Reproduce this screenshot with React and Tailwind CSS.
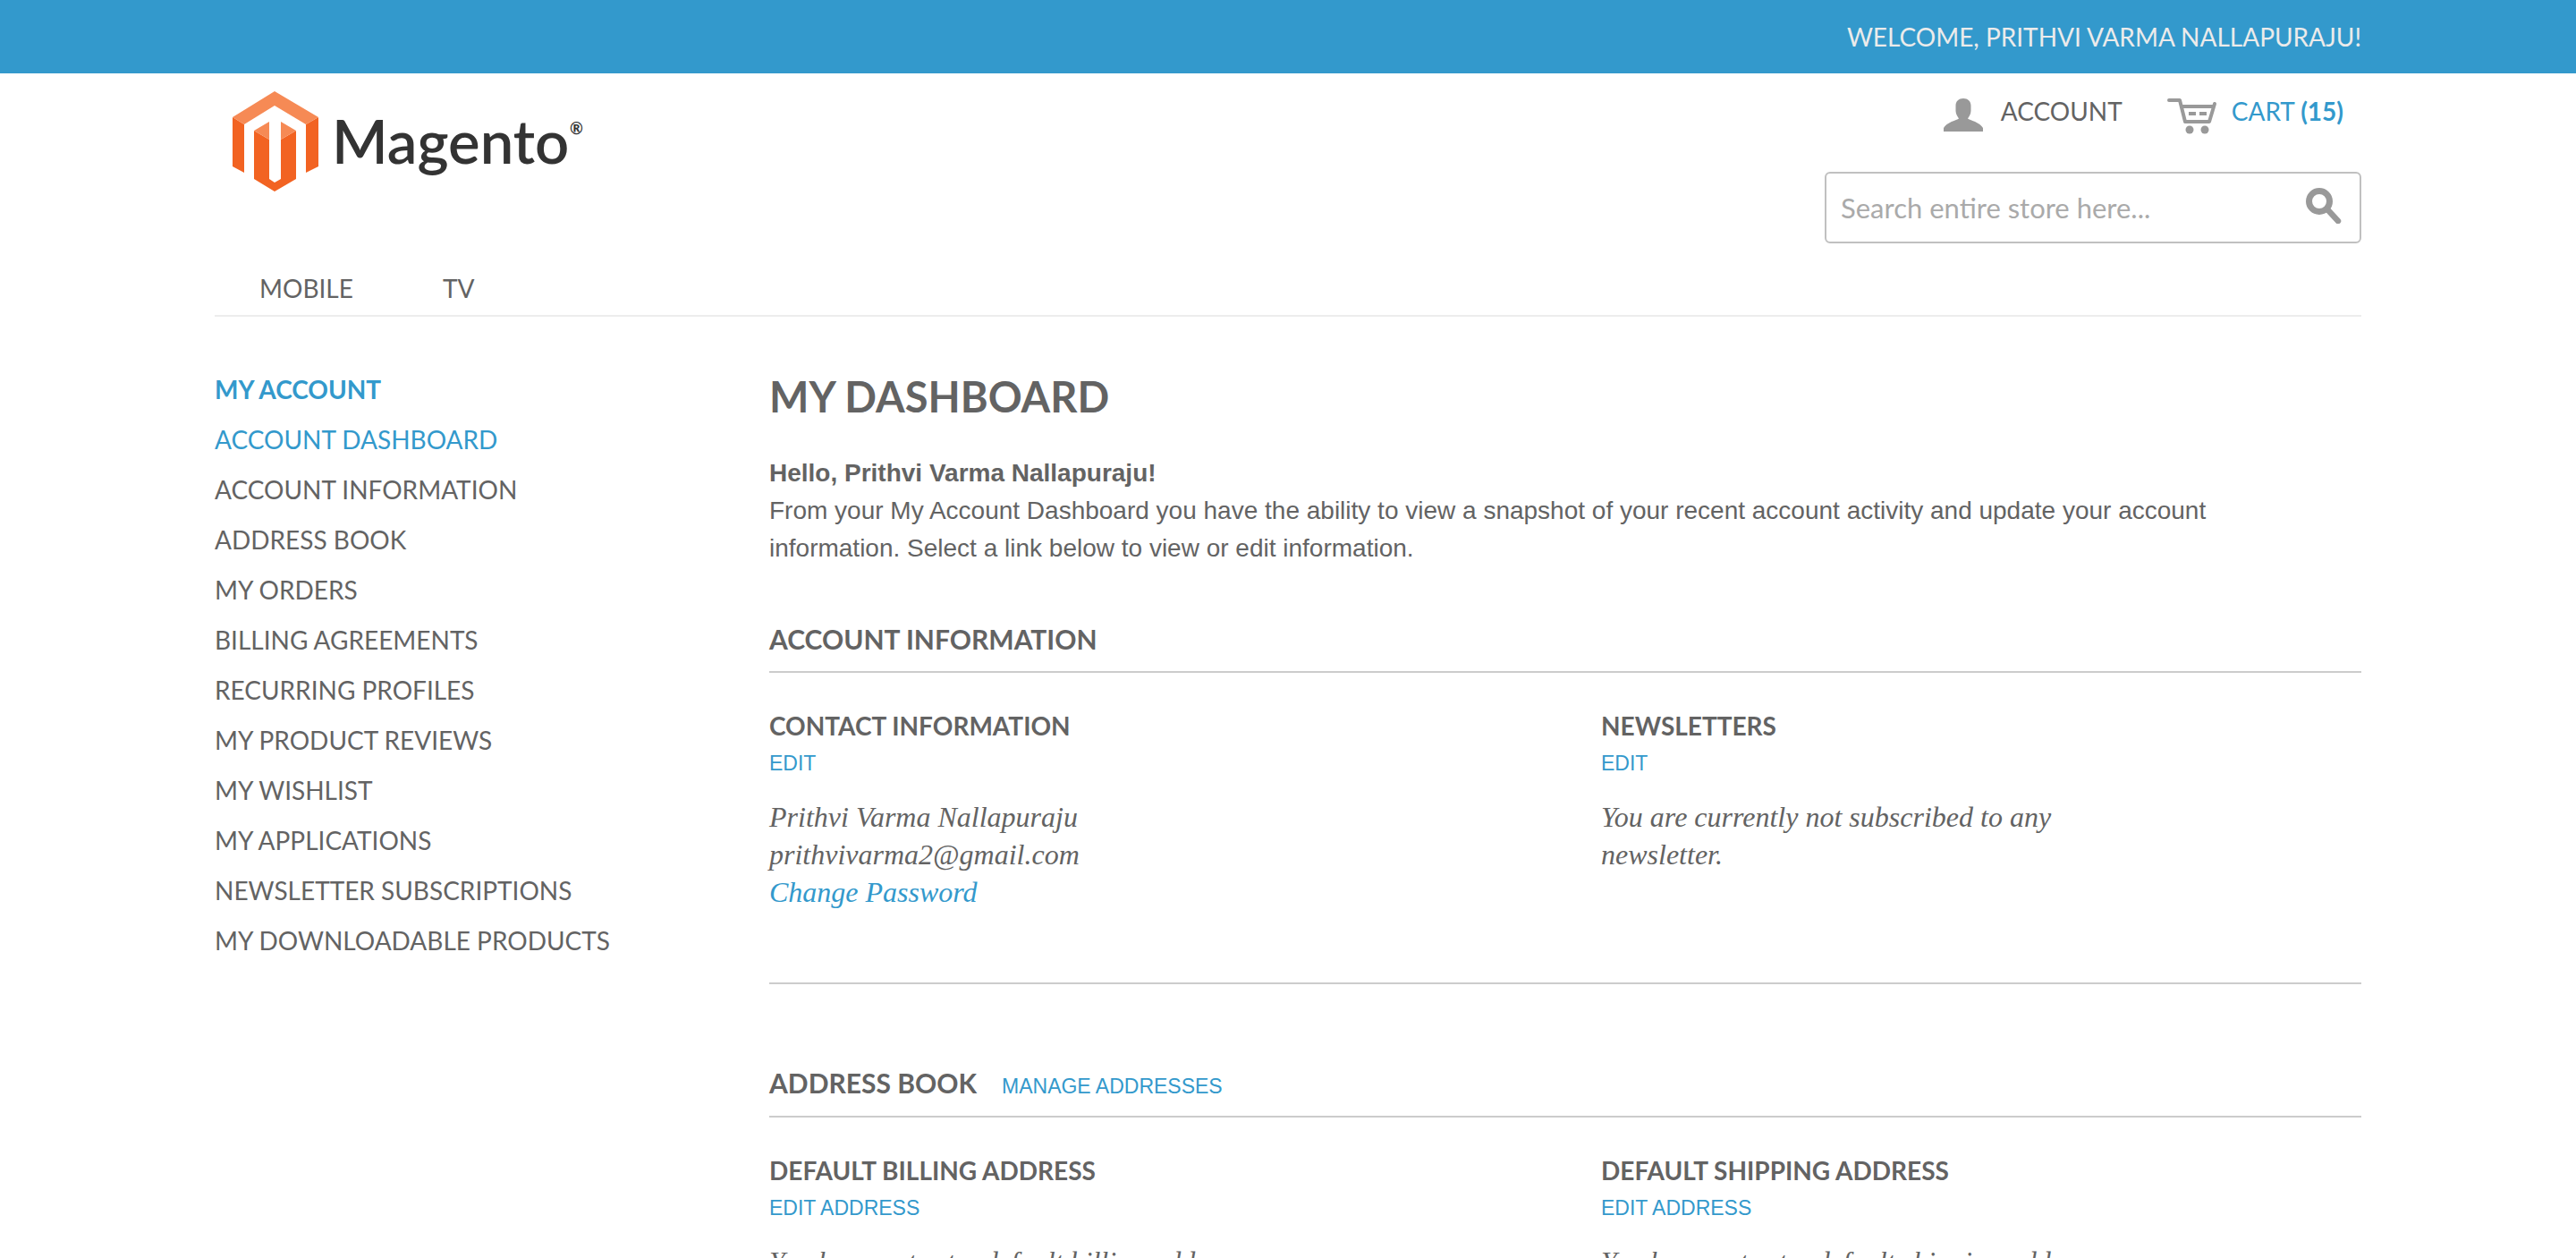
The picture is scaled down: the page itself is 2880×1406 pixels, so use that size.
const NAV_LINKS = [
  "Account Dashboard",
  "Account Information",
  "Address Book",
  "My Orders",
  "Billing Agreements",
  "Recurring Profiles",
  "My Product Reviews",
  "My Wishlist",
  "My Applications",
  "Newsletter Subscriptions",
  "My Downloadable Products",
];

function Logo() {
  return (
    <a href="#" aria-label="Magento" className="block">
      <svg width="400" height="128" viewBox="0 0 400 128" role="img" aria-hidden="true">
        <path d="M0 29V84L13 91V37Z M96 29V84L82 91V37Z M24 44V98L47 112L71 98V44L54 54V98L47 102L41 98V54Z" fill="#f26322" />
        <path d="M47 0L0 29L13 37L47 16L82 37L96 29Z M24 44L41 34V54Z M71 44L54 34V54Z" fill="#f68a55" />
        <text x="111" y="81" fontSize="67" fontWeight="600" fill="#333333" fontFamily="Lato, sans-serif">
          Magento
        </text>
        <text x="377" y="48" fontSize="18" fontWeight="700" fill="#333333" fontFamily="Lato, sans-serif">
          ®
        </text>
      </svg>
    </a>
  );
}

function PersonIcon() {
  return (
    <svg width="44" height="38" viewBox="0 0 44 38" fill="#999999" aria-hidden="true">
      <path d="M22 0C17 0 13.500 3 13.500 8V14C13.500 18 16 20.500 17 22.500C15 24 3 27 0 33V37H44V33C41 27 29 24 27 22.500C28 20.500 30.500 18 30.500 14V8C30.500 3 27 0 22 0Z" />
    </svg>
  );
}

function CartIcon() {
  return (
    <svg width="56" height="40" viewBox="0 0 56 40" fill="none" stroke="#999999" aria-hidden="true">
      <path d="M2 2H14L20 26H47L53 6" strokeWidth="4" strokeLinecap="round" strokeLinejoin="round" />
      <path d="M16 9H52" strokeWidth="4" />
      <path d="M24 17H32M36 17H44" strokeWidth="4" />
      <circle cx="25" cy="35" r="4.500" fill="#999999" stroke="none" />
      <circle cx="42" cy="35" r="4.500" fill="#999999" stroke="none" />
    </svg>
  );
}

function SearchIcon() {
  return (
    <svg width="40" height="40" viewBox="0 0 40 40" fill="none" stroke="#999999" aria-hidden="true">
      <circle cx="15" cy="15" r="11.500" strokeWidth="7" />
      <path d="M24 24L36 37" strokeWidth="6.500" strokeLinecap="round" />
    </svg>
  );
}

function Header() {
  return (
    <header className="mx-auto w-full max-w-[2400px]">
      <div className="flex justify-between">
        <div className="pt-5 pl-5">
          <Logo />
        </div>
        <div className="w-[600px]">
          <div className="flex justify-end gap-[50px] pt-5 pr-5 leading-[44px] uppercase">
            <a href="#" className="flex items-start gap-5">
              <span className="pt-2"><PersonIcon /></span>
              Account
            </a>
            <a href="#" className="flex items-start gap-4 text-[#3399cc]">
              <span className="pt-2"><CartIcon /></span>
              <span>Cart <span className="font-bold">(15)</span></span>
            </a>
          </div>
          <form className="mt-[42px] flex h-20 items-center rounded-md border-2 border-[#c0c0c0] pr-5 pl-4">
            <input
              type="search"
              aria-label="Search entire store"
              placeholder="Search entire store here..."
              className="min-w-0 flex-1 bg-transparent text-[31px] outline-none placeholder:text-[#aaaaaa]"
            />
            <button type="submit" aria-label="Search" className="pb-1"><SearchIcon /></button>
          </form>
        </div>
      </div>
      <nav className="flex gap-[100px] border-b-2 border-[#ededed] px-[50px] pt-7 pb-2 leading-[44px] uppercase">
        <a href="#">Mobile</a>
        <a href="#">TV</a>
      </nav>
    </header>
  );
}

function SectionTitle({ title, children }) {
  return (
    <div className="flex items-baseline gap-7 border-b-2 border-[#cccccc] pb-3">
      <h2 className="text-[30px] leading-[48px] font-bold uppercase">{title}</h2>
      {children}
    </div>
  );
}

function SmallLink({ children }) {
  return (
    <a href="#" className="block font-['Liberation_Sans',sans-serif] text-[23px] leading-[42px] text-[#3399cc] uppercase">
      {children}
    </a>
  );
}

function InfoBox({ title, link, children }) {
  return (
    <div>
      <h3 className="leading-[42px] font-bold uppercase">{title}</h3>
      <SmallLink>{link}</SmallLink>
      <div className="mt-[18px] max-w-[70%] font-['Liberation_Serif',serif] text-[32px] leading-[42px] italic">{children}</div>
    </div>
  );
}

export default function App() {
  return (
    <div className="h-screen overflow-hidden bg-white font-[Lato,sans-serif] text-[28px] text-[#636363]">
      <div className="bg-[#3399cc]">
        <p className="mx-auto max-w-[2400px] py-5 text-right leading-[42px] text-[#ebebeb] uppercase">
          Welcome, Prithvi Varma Nallapuraju!
        </p>
      </div>
      <Header />
      <div className="mx-auto flex w-full max-w-[2400px] pt-[53px]">
        <aside className="w-[620px] shrink-0 leading-[56px] uppercase">
          <h2 className="font-bold text-[#3399cc]">My Account</h2>
          <ul>
            {NAV_LINKS.map((label, i) => (
              <li key={label} className={i === 0 ? "text-[#3399cc]" : ""}>
                <a href="#">{label}</a>
              </li>
            ))}
          </ul>
        </aside>
        <main className="min-w-0 flex-1">
          <h1 className="pt-1 text-[47px] leading-[64px] font-bold uppercase">My Dashboard</h1>
          <div className="mt-[33px] pr-10 font-['Liberation_Sans',sans-serif] leading-[42px]">
            <p className="font-bold">Hello, Prithvi Varma Nallapuraju!</p>
            <p>
              From your My Account Dashboard you have the ability to view a snapshot of your recent account activity and
              update your account information. Select a link below to view or edit information.
            </p>
          </div>
          <section className="mt-14 border-b-2 border-[#cccccc] pb-20">
            <SectionTitle title="Account Information" />
            <div className="grid grid-cols-2 gap-20 pt-[38px]">
              <InfoBox title="Contact Information" link="Edit">
                <p>Prithvi Varma Nallapuraju</p>
                <p>prithvivarma2@gmail.com</p>
                <p><a href="#" className="text-[#3399cc]">Change Password</a></p>
              </InfoBox>
              <InfoBox title="Newsletters" link="Edit">
                <p>You are currently not subscribed to any newsletter.</p>
              </InfoBox>
            </div>
          </section>
          <section className="mt-[86px]">
            <SectionTitle title="Address Book">
              <SmallLink>Manage Addresses</SmallLink>
            </SectionTitle>
            <div className="grid grid-cols-2 gap-20 pt-[38px]">
              <InfoBox title="Default Billing Address" link="Edit Address">
                <p>You have not set a default billing address.</p>
              </InfoBox>
              <InfoBox title="Default Shipping Address" link="Edit Address">
                <p>You have not set a default shipping address.</p>
              </InfoBox>
            </div>
          </section>
        </main>
      </div>
    </div>
  );
}
